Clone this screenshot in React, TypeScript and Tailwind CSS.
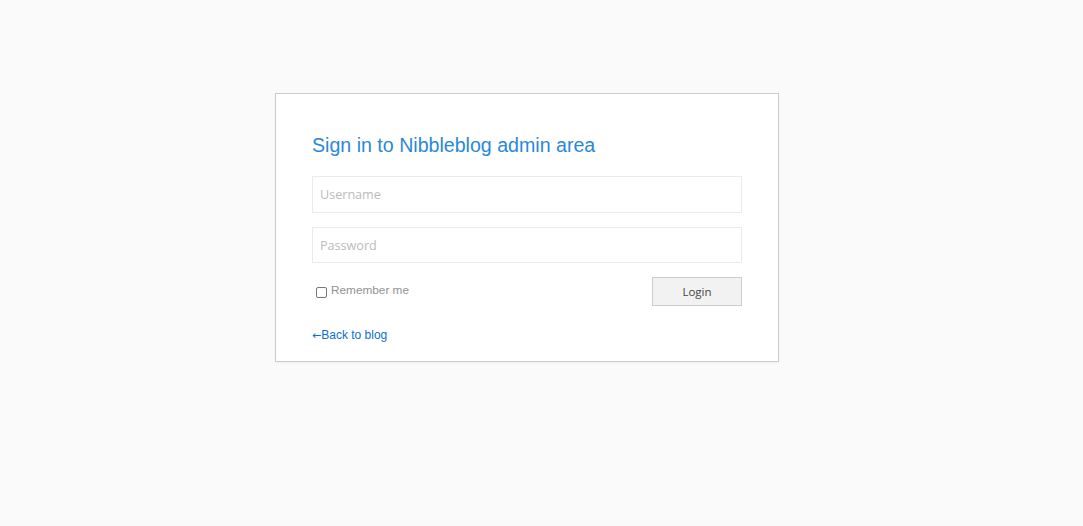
import { useState } from 'react';

export default function App() {
  const [remember, setRemember] = useState(false);

  return (
    <div className="min-h-[526px] w-full bg-[#fafafa] pt-[93px]" style={{ fontFamily: '"Liberation Sans", Arial, sans-serif' }}>
      <div className="ml-[275px] w-[504px] border border-[#cccccc] bg-white px-[36px] pt-[37px] pb-[17px] shadow-[0_1px_2px_rgba(0,0,0,0.05)]">
        <h1 className="mb-[17px] text-[19.6px] leading-[28px] font-normal text-[#2a88d8]">
          Sign in to Nibbleblog admin area
        </h1>

        <input
          type="text"
          placeholder="Username"
          className="mb-[14px] block h-[37px] w-[430px] border border-[#ebebeb] px-[7px] text-[12.6px] text-[#555] outline-none placeholder:text-[#bbbbbb]"
          style={{ fontFamily: '"Open Sans", "Noto Sans", sans-serif' }}
        />
        <input
          type="password"
          placeholder="Password"
          className="mb-[14px] block h-[36px] w-[430px] border border-[#ebebeb] px-[7px] text-[12.6px] text-[#555] outline-none placeholder:text-[#bbbbbb]"
          style={{ fontFamily: '"Open Sans", "Noto Sans", sans-serif' }}
        />

        <div className="flex w-[430px] items-start justify-between">
          <label className="mt-[6px] ml-[4px] flex items-start gap-[4px] text-[11.8px] text-[#929292]">
            <input
              type="checkbox"
              checked={remember}
              onChange={(e) => setRemember(e.target.checked)}
              className="mt-[4px] h-[11px] w-[11px] appearance-none rounded-[2px] border border-[#777] bg-white"
            />
            <span className="leading-[14px]">Remember me</span>
          </label>
          <button
            className="h-[29px] w-[90px] border border-[#cccccc] bg-[#f2f2f2] pt-[1px] text-[11.5px] text-[#444]"
            style={{ fontFamily: '"Open Sans", "Noto Sans", sans-serif' }}
          >
            Login
          </button>
        </div>

        <a href="#" className="mt-[21px] block text-[12px] leading-[16px] text-[#0b6fd1]">
          <span style={{ fontFamily: '"DejaVu Sans", sans-serif' }} className="text-[11px]">←</span>Back to blog
        </a>
      </div>
    </div>
  );
}
